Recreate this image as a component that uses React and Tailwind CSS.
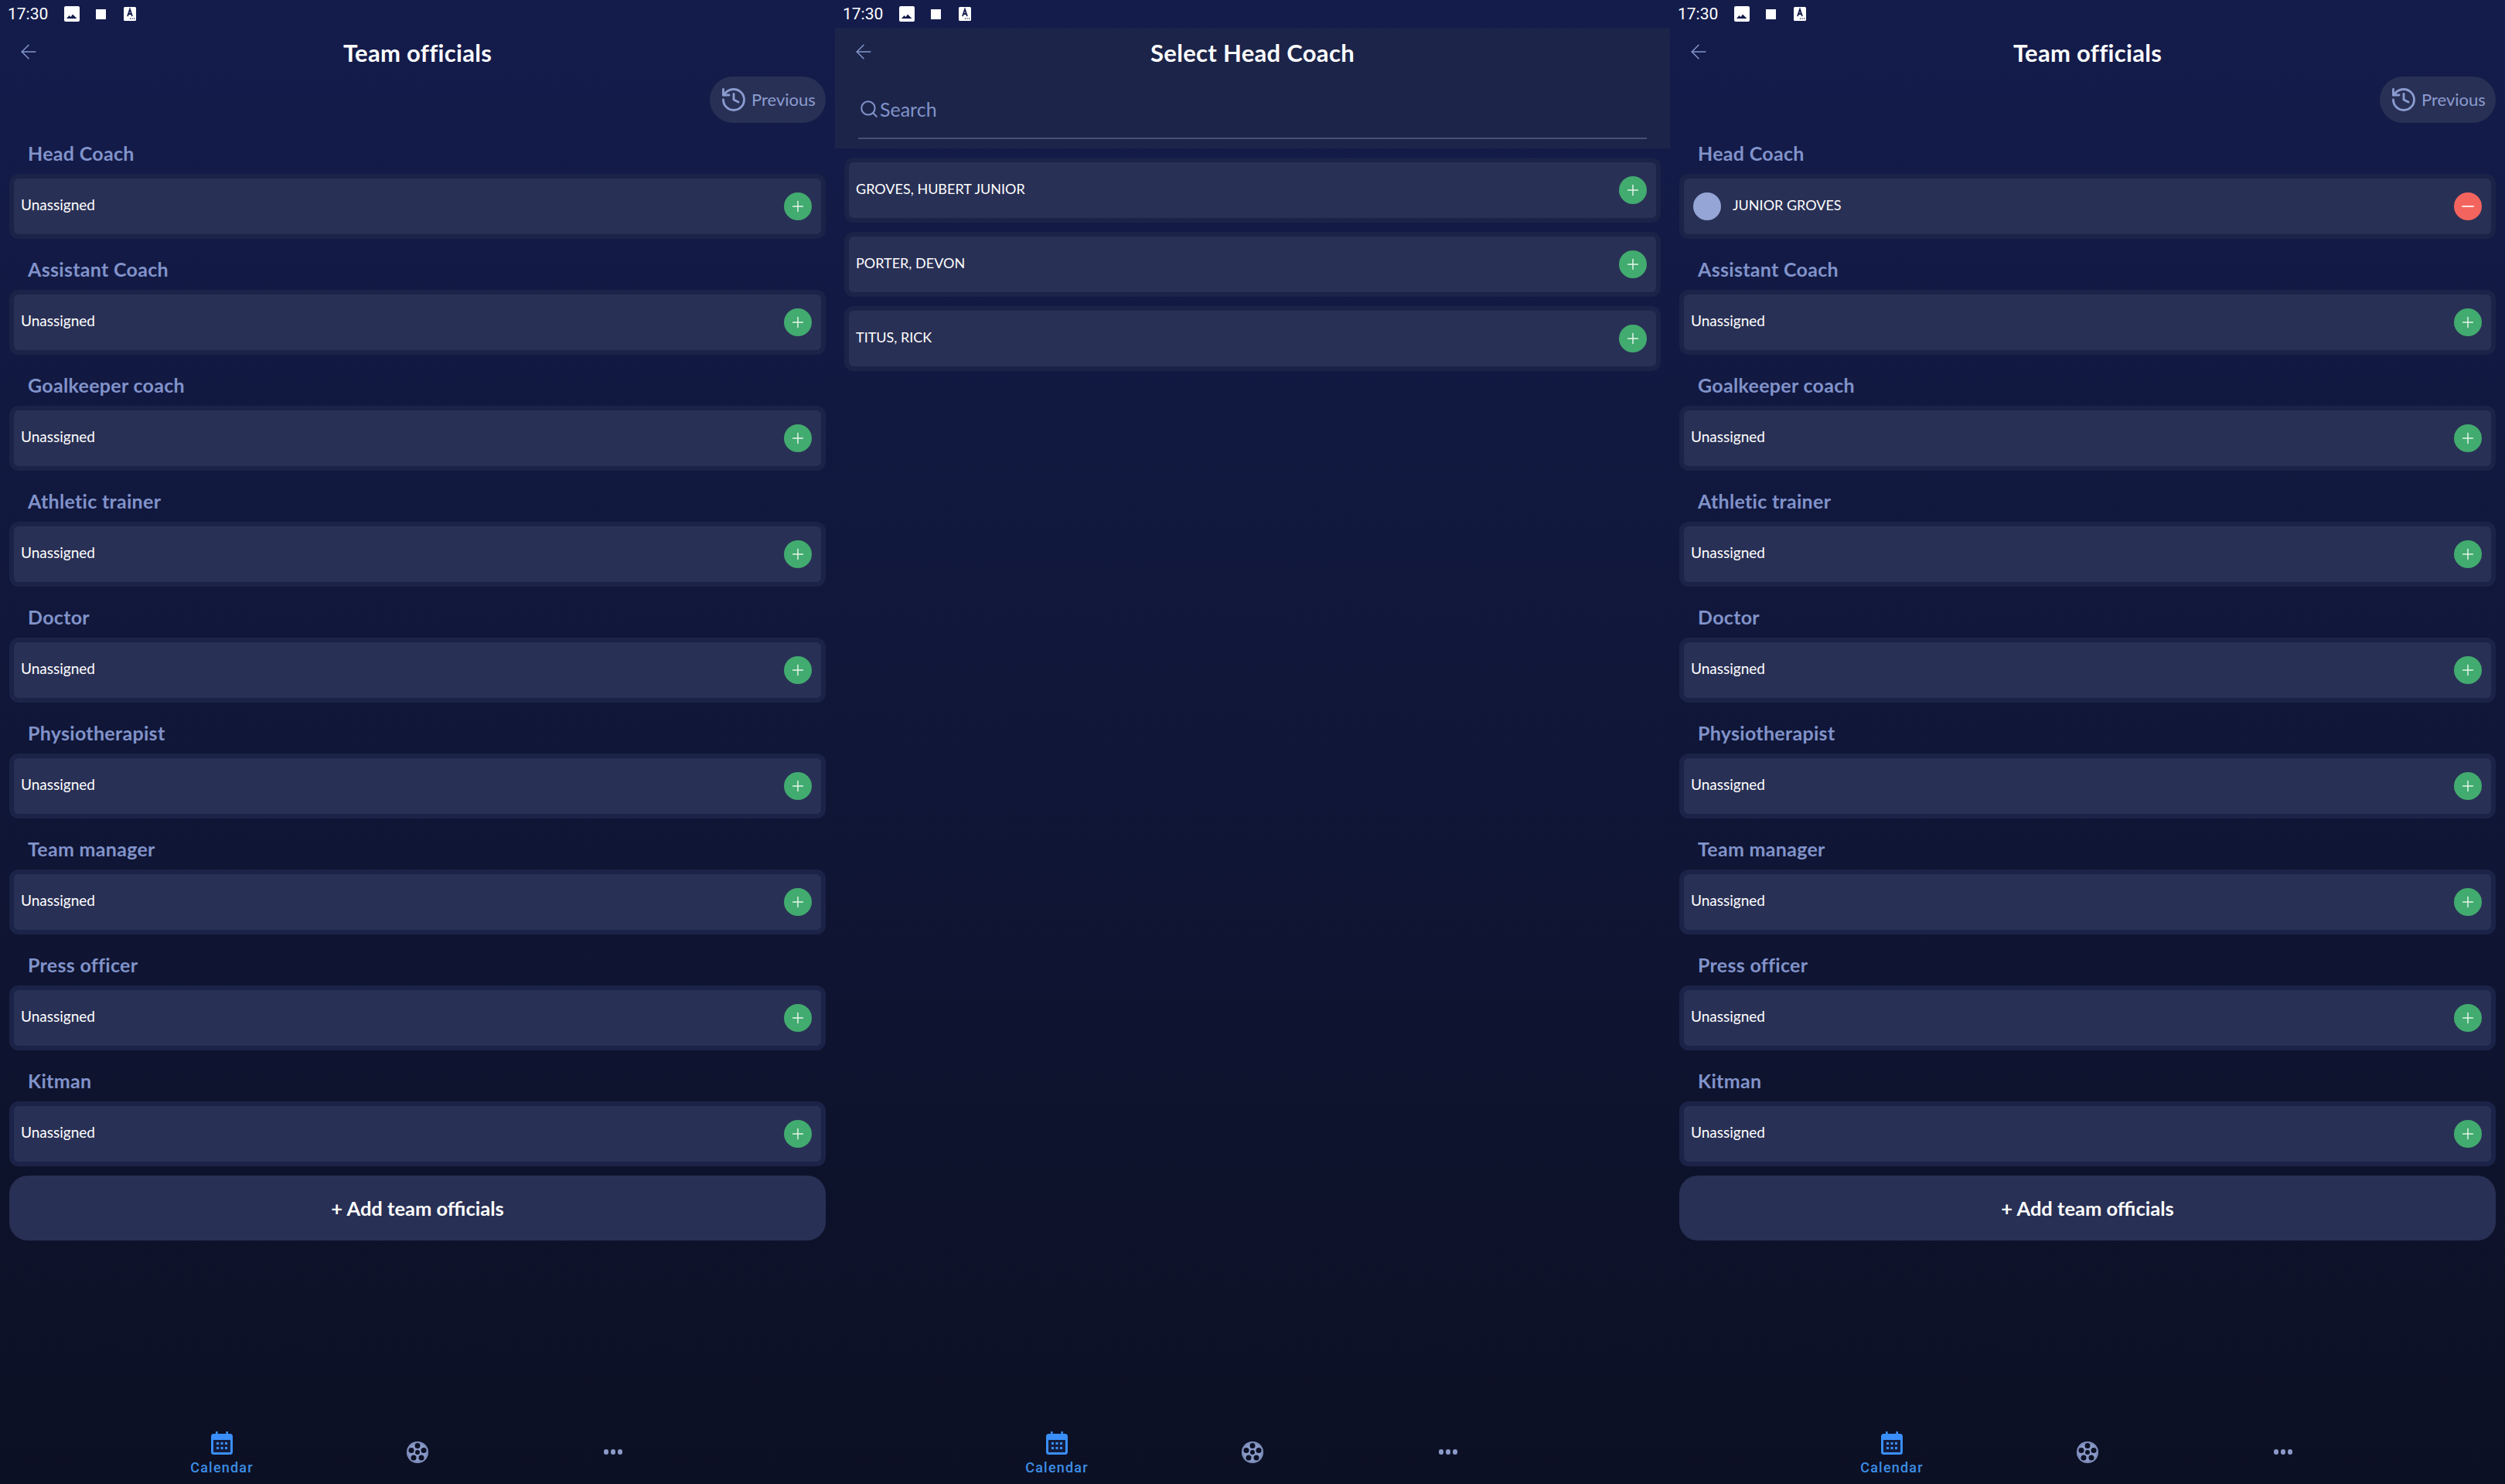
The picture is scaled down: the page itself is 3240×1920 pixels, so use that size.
import React from 'react';
import { ArrowLeft, History, Search, Plus, Minus } from 'lucide-react';

const ROLES = [
  'Head Coach',
  'Assistant Coach',
  'Goalkeeper coach',
  'Athletic trainer',
  'Doctor',
  'Physiotherapist',
  'Team manager',
  'Press officer',
  'Kitman',
];

const CANDIDATES = ['GROVES, HUBERT JUNIOR', 'PORTER, DEVON', 'TITUS, RICK'];

const StatusBar = () => (
  <div className="h-9 shrink-0 flex items-center pl-[10px] text-white">
    <span className="w-[73px] font-['Roboto',sans-serif] text-[21px] leading-none">17:30</span>
    <svg width="20" height="20" viewBox="0 0 20 20" className="mr-[21px]">
      <rect width="20" height="20" rx="2" fill="#fff" />
      <path d="M3 16l3.500-4 2 2 2.500-3.500 5.500 5.500z" fill="#141c4c" />
    </svg>
    <div className="w-[13px] h-[13px] bg-white mr-[23px]" />
    <svg width="16" height="18" viewBox="0 0 16 18">
      <rect width="16" height="18" rx="1.500" fill="#fff" />
      <path d="M5 12l3-9 3 9M6 9h4" fill="none" stroke="#141c4c" strokeWidth="1.800" />
      <path d="M8 15h1M10.500 15h1M13 15h1" stroke="#141c4c" strokeWidth="1.400" />
    </svg>
  </div>
);

const Header = ({ title }) => (
  <div className="h-[60px] shrink-0 relative flex items-center justify-center">
    <ArrowLeft size={30} strokeWidth={1.2} className="absolute left-[22px] top-[16px] text-[#8496cc]" />
    <h1 className="text-[31px] font-bold text-white leading-none tracking-[0.3px] mt-[5px]">{title}</h1>
  </div>
);

const RoundButton = ({ remove }) => (
  <div className={`w-9 h-9 rounded-full flex items-center justify-center ${remove ? 'bg-[#f4645f]' : 'bg-[#42ab6f]'}`}>
    {remove ? (
      <Minus size={24} strokeWidth={2} className="text-[#ffe3e0]" />
    ) : (
      <Plus size={22} strokeWidth={1.6} className="text-[#e6f6ec]" />
    )}
  </div>
);

const Card = ({ children, remove }) => (
  <div className="h-[84px] rounded-[12px] bg-[#1c2348] p-[6px]">
    <div className="h-full rounded-[6px] bg-[#293055] flex items-center justify-between pl-[9px] pr-[12px]">
      <div className="flex items-center">{children}</div>
      <RoundButton remove={remove} />
    </div>
  </div>
);

const NavBar = () => (
  <div className="mt-auto h-[80px] shrink-0 w-[759px] mx-auto grid grid-cols-3">
    <div className="flex flex-col items-center pt-[12px]">
      <svg width="28" height="30" viewBox="0 0 28 30" className="shrink-0">
        <path d="M6 0h2.600v3H19.400V0H22v3h2.500A3.500 3.500 0 0 1 28 6.500v20a3.500 3.500 0 0 1-3.500 3.500h-21A3.500 3.500 0 0 1 0 26.500v-20A3.500 3.500 0 0 1 3.500 3H6z" fill="#3a8ffa" />
        <rect x="3" y="11" width="22" height="16" fill="#141c3c" />
        <path d="M7 14h3v3H7zM12.500 14h3v3h-3zM18 14h3v3h-3zM7 20h3v3H7zM12.500 20h3v3h-3zM18 20h3v3h-3z" fill="#3a8ffa" />
      </svg>
      <span className="mt-[7px] font-['Roboto',sans-serif] font-medium text-[#3d8ee6] text-[18px] leading-5 tracking-[1.2px]">Calendar</span>
    </div>
    <div className="flex justify-center pt-[24px]">
      <svg width="30" height="30" viewBox="0 0 30 30">
        <circle cx="15" cy="15" r="14" fill="#8a9ac8" />
        <circle cx="15" cy="15" r="12.500" fill="none" stroke="#6f7fae" strokeWidth="1" />
        <g fill="#0c1024">
          <circle cx="15" cy="15" r="3" />
          <circle cx="15" cy="6.500" r="3.500" />
          <circle cx="23" cy="12.400" r="3.500" />
          <circle cx="20" cy="21.900" r="3.500" />
          <circle cx="10" cy="21.900" r="3.500" />
          <circle cx="7" cy="12.400" r="3.500" />
        </g>
      </svg>
    </div>
    <div className="flex justify-center items-start pt-[35px] gap-[3px]">
      <span className="w-[6px] h-[7px] rounded-full bg-[#8a9ac8]" />
      <span className="w-[6px] h-[7px] rounded-full bg-[#8a9ac8]" />
      <span className="w-[6px] h-[7px] rounded-full bg-[#8a9ac8]" />
    </div>
  </div>
);

const OfficialsScreen = ({ assigned }) => (
  <div className="w-[1080px] h-[1920px] flex flex-col">
    <StatusBar />
    <Header title="Team officials" />
    <div className="h-[63px] shrink-0 pt-[3px] pr-[12px] flex justify-end">
      <div className="h-[60px] w-[150px] rounded-full bg-[#293055] flex items-center pl-[13px] text-[#8b9cd0]">
        <History size={36} strokeWidth={1.900} />
        <span className="ml-[5px] text-[22px] leading-none">Previous</span>
      </div>
    </div>
    <div className="px-[12px]">
      {ROLES.map((role, i) => (
        <div key={role}>
          <div className="h-[66px] pt-[23px] pl-[24px] text-[25px] leading-8 font-bold text-[#8193ca] tracking-[0.3px]">{role}</div>
          {assigned && i === 0 ? (
            <Card remove>
              <div className="w-9 h-9 rounded-full bg-[#94a5d6] ml-[3px] mr-[15px]" />
              <span className="mb-1 text-[18px] text-white">JUNIOR GROVES</span>
            </Card>
          ) : (
            <Card>
              <span className="mb-1 text-[19px] text-white">Unassigned</span>
            </Card>
          )}
        </div>
      ))}
      <button className="mt-3 w-full h-[84px] rounded-[24px] bg-[#293055] text-white text-[25.500px] font-bold">
        + Add team officials
      </button>
    </div>
    <NavBar />
  </div>
);

const SelectScreen = () => (
  <div className="w-[1080px] h-[1920px] flex flex-col">
    <StatusBar />
    <div className="h-[156px] shrink-0 bg-[#1c2449] px-[30px]">
      <div className="-mx-[30px]">
        <Header title="Select Head Coach" />
      </div>
      <div className="h-[96px] flex items-end pb-[12px]">
        <div className="w-full h-[76px] border-b-2 border-[#48507a] flex items-center pl-[1px] text-[#8193ca]">
          <Search size={26} strokeWidth={1.900} />
          <span className="ml-[1px] text-[25px] leading-none">Search</span>
        </div>
      </div>
    </div>
    <div className="mt-3 px-[12px] flex flex-col gap-3">
      {CANDIDATES.map((name) => (
        <Card key={name}>
          <span className="mb-1 text-[18px] text-white">{name}</span>
        </Card>
      ))}
    </div>
    <NavBar />
  </div>
);

export default function App() {
  return (
    <div className="w-[3240px] h-[1920px] flex font-['Lato',sans-serif] bg-gradient-to-b from-[#141c4c] to-[#0c1024]">
      <OfficialsScreen />
      <SelectScreen />
      <OfficialsScreen assigned />
    </div>
  );
}
